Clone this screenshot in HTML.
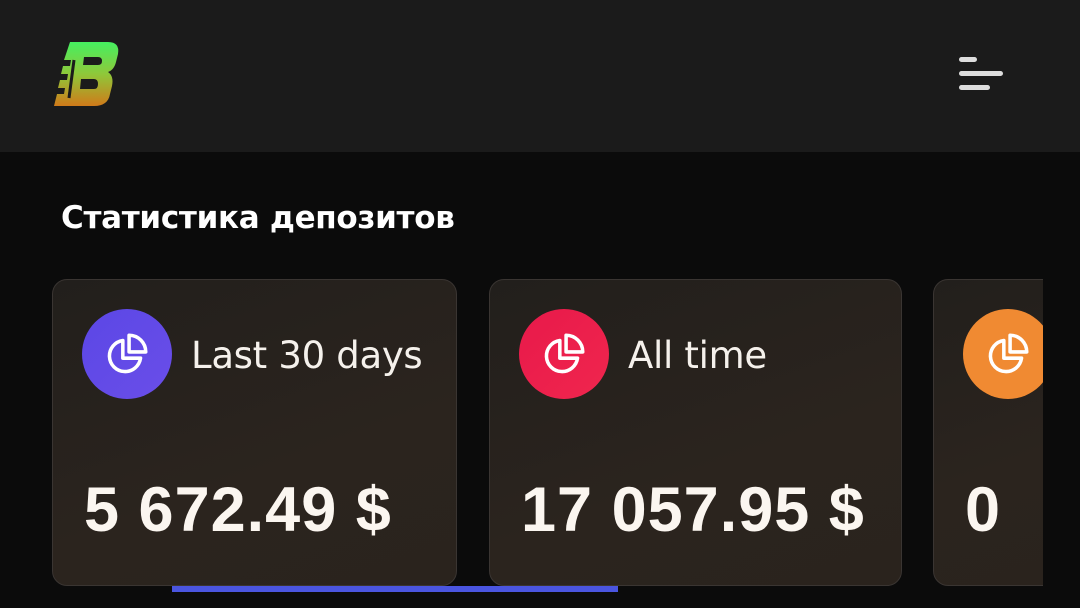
<!DOCTYPE html>
<html><head><meta charset="utf-8"><style>
*{margin:0;padding:0;box-sizing:border-box}
body{width:1080px;height:608px;overflow:hidden;background:#0b0b0b;font-family:"Liberation Sans","DejaVu Sans",sans-serif;position:relative;color:#f5f1ec}
.hdr{position:absolute;left:0;top:0;width:1080px;height:152px;background:#1b1b1b}
.ham div{position:absolute;left:959px;height:5px;border-radius:3px;background:#ddd}
h1{position:absolute;left:61px;top:200px;font-size:31px;font-weight:bold;color:#fff;font-family:"DejaVu Sans",sans-serif;letter-spacing:-0.3px}
.card{position:absolute;top:279px;height:307px;border-radius:15px;border:1.5px solid #3a3532;background:linear-gradient(160deg,#221f1c,#2b241e 60%,#2a231d);overflow:hidden}
.ic{position:absolute;left:29px;top:29px;width:90px;height:90px;border-radius:50%;display:flex;align-items:center;justify-content:center}
.t{position:absolute;left:138px;top:54px;font-size:37px;font-family:"DejaVu Sans",sans-serif;color:#f5f1ec;white-space:nowrap;letter-spacing:-0.3px}
.v{position:absolute;left:31px;top:194px;font-size:63px;font-weight:bold;font-family:"Liberation Sans",sans-serif;white-space:nowrap;color:#fbf6f0;letter-spacing:1px}
.clip{position:absolute;left:1043px;top:270px;width:40px;height:330px;background:#0b0b0b}
.bar{position:absolute;left:172px;top:586px;width:446px;height:6px;background:#4a55e0}
</style></head><body>
<div class="hdr">
<svg style="position:absolute;left:50px;top:40px" width="72" height="68" viewBox="0 0 72 68">
<defs><linearGradient id="g" x1="0" y1="0" x2="0" y2="1"><stop offset="0" stop-color="#45f060"/><stop offset="0.5" stop-color="#8fc83a"/><stop offset="1" stop-color="#d07a1a"/></linearGradient></defs>
<path d="M20 2 H58 Q70 2 68 14 L66 22 Q64 30 58 32 Q64 36 62 46 L60 54 Q58 66 44 66 H4 L7 54 H14 L15 48 H8 L10 40 H17 L18 34 H11 L13 26 H20 L21 20 H14 Z M34 17 L33 25 H48 Q52 25 52 21 Q52 17 48 17 Z M31 39 L30 49 H44 Q48 49 48 44 Q48 39 44 39 Z" fill="url(#g)" fill-rule="evenodd"/>
<path d="M24 20 L19 58" stroke="#1b1b1b" stroke-width="3"/>
</svg>
<div class="ham"><div style="top:57px;width:18px"></div><div style="top:71px;width:44px"></div><div style="top:85px;width:31px"></div></div>
</div>
<h1>Статистика депозитов</h1>
<div class="card" style="left:52px;width:405px">
<div class="ic" style="background:linear-gradient(135deg,#5b47e6,#6a4ee8)"><svg width="50" height="50" viewBox="0 0 24 24" fill="none" stroke="#fff" stroke-width="1.7" stroke-linejoin="round"><path d="M10 5.5 A7.5 7.5 0 1 0 18.5 14 H10 Z"/><path d="M13 3 V11 H21 A8 8 0 0 0 13 3 Z"/></svg></div>
<div class="t">Last 30 days</div><div class="v">5 672.49 $</div></div>
<div class="card" style="left:489px;width:413px">
<div class="ic" style="background:linear-gradient(135deg,#e8194a,#f0264e)"><svg width="50" height="50" viewBox="0 0 24 24" fill="none" stroke="#fff" stroke-width="1.7" stroke-linejoin="round"><path d="M10 5.5 A7.5 7.5 0 1 0 18.5 14 H10 Z"/><path d="M13 3 V11 H21 A8 8 0 0 0 13 3 Z"/></svg></div>
<div class="t">All time</div><div class="v">17 057.95 $</div></div>
<div class="card" style="left:933px;width:140px">
<div class="ic" style="background:#f08a32"><svg width="50" height="50" viewBox="0 0 24 24" fill="none" stroke="#fff" stroke-width="1.7" stroke-linejoin="round"><path d="M10 5.5 A7.5 7.5 0 1 0 18.5 14 H10 Z"/><path d="M13 3 V11 H21 A8 8 0 0 0 13 3 Z"/></svg></div>
<div class="v">0</div></div>
<div class="clip"></div>
<div class="bar"></div>
</body></html>
